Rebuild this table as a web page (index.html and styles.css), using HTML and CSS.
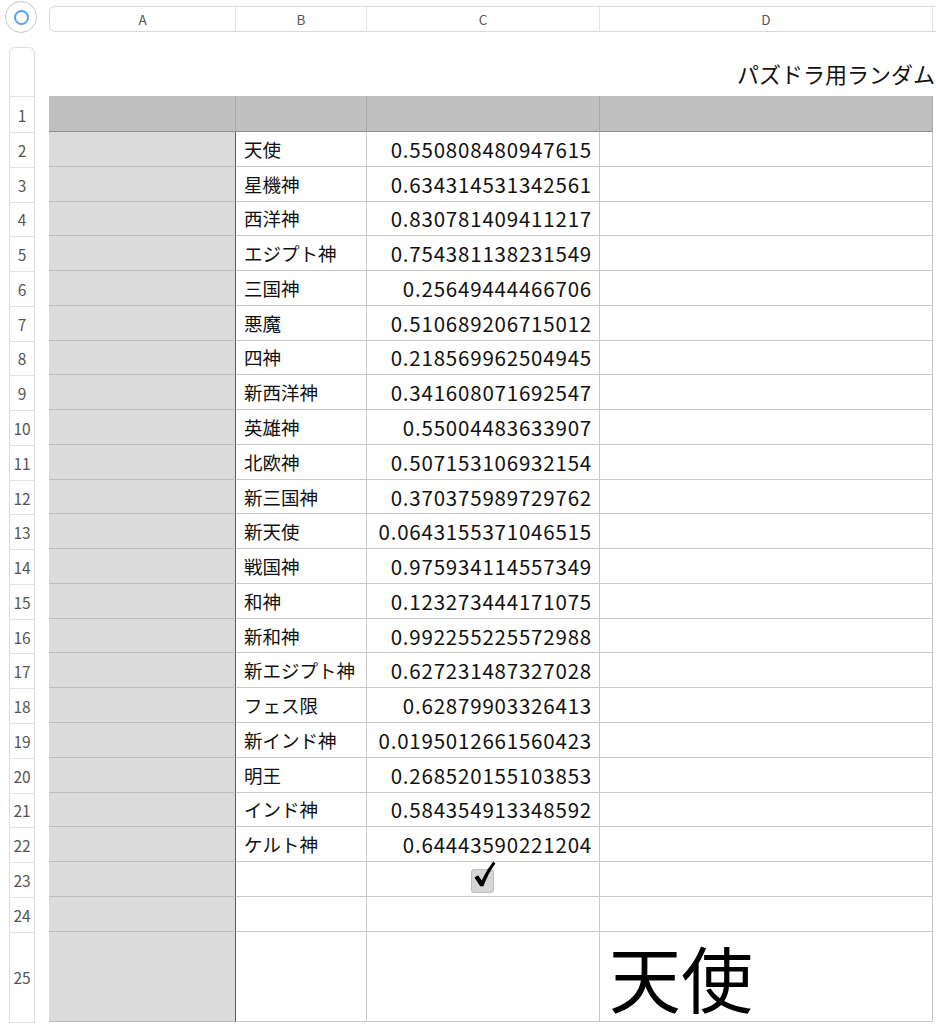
FILE: index.html
```html
<!DOCTYPE html>
<html lang="ja">
<head>
<meta charset="utf-8">
<title>パズドラ用ランダム</title>
<link rel="stylesheet" href="styles.css">
</head>
<body>
<div class="app">
  <div class="topbar">
    <div class="corner"><span class="corner-dot"></span></div>
    <div class="colheads">
      <div class="colhead col-a">A</div>
      <div class="colhead col-b">B</div>
      <div class="colhead col-c">C</div>
      <div class="colhead col-d">D</div>
      <div class="colhead col-e"></div>
    </div>
  </div>
  <div class="sheet">
    <div class="rownums">
      <div class="rn rn-title"></div>
      <div class="rn rn-head">1</div>
      <div class="rn">2</div>
      <div class="rn">3</div>
      <div class="rn">4</div>
      <div class="rn">5</div>
      <div class="rn">6</div>
      <div class="rn">7</div>
      <div class="rn">8</div>
      <div class="rn">9</div>
      <div class="rn">10</div>
      <div class="rn">11</div>
      <div class="rn">12</div>
      <div class="rn">13</div>
      <div class="rn">14</div>
      <div class="rn">15</div>
      <div class="rn">16</div>
      <div class="rn">17</div>
      <div class="rn">18</div>
      <div class="rn">19</div>
      <div class="rn">20</div>
      <div class="rn">21</div>
      <div class="rn">22</div>
      <div class="rn">23</div>
      <div class="rn">24</div>
      <div class="rn rn-big">25</div>
    </div>
    <div class="tablewrap">
      <div class="title"><span class="title-text">パズドラ用ランダム</span></div>
      <div class="grid">
        <div class="c hdr"></div><div class="c hdr"></div><div class="c hdr"></div><div class="c hdr"></div>

        <div class="c ca"></div><div class="c name">天使</div><div class="c num">0.550808480947615</div><div class="c"></div>
        <div class="c ca"></div><div class="c name">星機神</div><div class="c num">0.634314531342561</div><div class="c"></div>
        <div class="c ca"></div><div class="c name">西洋神</div><div class="c num">0.830781409411217</div><div class="c"></div>
        <div class="c ca"></div><div class="c name">エジプト神</div><div class="c num">0.754381138231549</div><div class="c"></div>
        <div class="c ca"></div><div class="c name">三国神</div><div class="c num">0.25649444466706</div><div class="c"></div>
        <div class="c ca"></div><div class="c name">悪魔</div><div class="c num">0.510689206715012</div><div class="c"></div>
        <div class="c ca"></div><div class="c name">四神</div><div class="c num">0.218569962504945</div><div class="c"></div>
        <div class="c ca"></div><div class="c name">新西洋神</div><div class="c num">0.341608071692547</div><div class="c"></div>
        <div class="c ca"></div><div class="c name">英雄神</div><div class="c num">0.55004483633907</div><div class="c"></div>
        <div class="c ca"></div><div class="c name">北欧神</div><div class="c num">0.507153106932154</div><div class="c"></div>
        <div class="c ca"></div><div class="c name">新三国神</div><div class="c num">0.370375989729762</div><div class="c"></div>
        <div class="c ca"></div><div class="c name">新天使</div><div class="c num">0.0643155371046515</div><div class="c"></div>
        <div class="c ca"></div><div class="c name">戦国神</div><div class="c num">0.975934114557349</div><div class="c"></div>
        <div class="c ca"></div><div class="c name">和神</div><div class="c num">0.123273444171075</div><div class="c"></div>
        <div class="c ca"></div><div class="c name">新和神</div><div class="c num">0.992255225572988</div><div class="c"></div>
        <div class="c ca"></div><div class="c name">新エジプト神</div><div class="c num">0.627231487327028</div><div class="c"></div>
        <div class="c ca"></div><div class="c name">フェス限</div><div class="c num">0.62879903326413</div><div class="c"></div>
        <div class="c ca"></div><div class="c name">新インド神</div><div class="c num">0.0195012661560423</div><div class="c"></div>
        <div class="c ca"></div><div class="c name">明王</div><div class="c num">0.268520155103853</div><div class="c"></div>
        <div class="c ca"></div><div class="c name">インド神</div><div class="c num">0.584354913348592</div><div class="c"></div>
        <div class="c ca"></div><div class="c name">ケルト神</div><div class="c num">0.64443590221204</div><div class="c"></div>

        <div class="c ca"></div><div class="c"></div>
        <div class="c check-cell">
          <span class="checkbox">
            <svg class="checkmark" viewBox="0 0 24 28" width="24" height="28" aria-hidden="true">
              <path d="M2.5 17.5 L6.2 15.2 L9.6 20.6 Q14.5 10 21.2 1.6 L23.4 3.4 Q16.6 12.5 11.4 26.2 L8.2 26.2 Z" fill="#000"/>
            </svg>
          </span>
        </div>
        <div class="c"></div>

        <div class="c ca"></div><div class="c"></div><div class="c"></div><div class="c"></div>

        <div class="c ca"></div><div class="c"></div><div class="c"></div><div class="c big">天使</div>
      </div>
    </div>
  </div>
</div>
</body>
</html>
```

FILE: styles.css
```css
html, body {
  margin: 0;
  padding: 0;
  background: #ffffff;
}

body {
  font-family: "Noto Sans CJK JP", "Noto Sans", sans-serif;
  color: #111;
  overflow: hidden;
  width: 936px;
  height: 1024px;
}

.app {
  width: 936px;
  overflow: hidden;
}

/* top bar */
.topbar {
  display: flex;
  align-items: flex-start;
  padding: 1px 0 0 5px;
  height: 34px;
  box-sizing: border-box;
}

.corner {
  width: 32px;
  height: 32px;
  box-sizing: border-box;
  border: 1.5px solid #c8c8c8;
  border-radius: 50%;
  display: flex;
  align-items: center;
  justify-content: center;
  flex: none;
}

.corner-dot {
  width: 15px;
  height: 15px;
  box-sizing: border-box;
  border: 2px solid #5b9df0;
  border-radius: 50%;
}

.colheads {
  display: flex;
  margin: 5px 0 0 12px;
  height: 26px;
  box-sizing: border-box;
  border: 1px solid #dadada;
  border-radius: 6px;
  flex: none;
  width: 920px;
}

.colhead {
  box-sizing: border-box;
  border-right: 1px solid #e2e2e2;
  font-size: 13.5px;
  color: #555;
  display: flex;
  align-items: center;
  justify-content: center;
  height: 100%;
  flex: none;
}

.col-a { width: 186px; }
.col-b { width: 131px; }
.col-c { width: 233px; }
.col-d { width: 333px; }
.col-e { flex: 1; border-right: none; }

/* sheet */
.sheet {
  display: flex;
  align-items: flex-start;
  margin-top: 13px;
}

.rownums {
  margin-left: 9px;
  width: 26px;
  box-sizing: border-box;
  border: 1px solid #dedede;
  border-bottom: none;
  border-radius: 6px 6px 0 0;
  display: flex;
  flex-direction: column;
  flex: none;
}

.rn {
  height: 34.78px;
  box-sizing: border-box;
  border-bottom: 1px solid #e3e3e3;
  font-size: 15.5px;
  color: #555;
  display: flex;
  align-items: center;
  justify-content: center;
}

.rn-title { height: 49px; }
.rn-head { height: 36px; }
.rn-big { height: 90px; }

.tablewrap {
  margin-left: 14px;
  flex: none;
  width: 900px;
}

.title {
  height: 49px;
  display: flex;
  align-items: center;
  padding-left: 688px;
  box-sizing: border-box;
  white-space: nowrap;
  overflow: hidden;
}

.title-text {
  font-size: 22px;
  color: #111;
  padding-top: 2px;
}

.grid {
  display: grid;
  grid-template-columns: 187px 131px 233px 333px;
  grid-template-rows: 36px repeat(23, 34.78px) 90px;
}

.c {
  box-sizing: border-box;
  border-right: 1px solid #c9c9c9;
  border-bottom: 1px solid #c9c9c9;
  display: flex;
  align-items: center;
  min-width: 0;
  white-space: nowrap;
}

.hdr {
  background: #bfc0bf;
  border-bottom: 1px solid #8c8c8c;
  border-right-color: #a9a9a9;
}

.ca {
  background: #dbdbdb;
  border-right: 1px solid #5c5c5c;
  border-bottom-color: #bcbcbc;
}

.name {
  font-size: 18.5px;
  padding-left: 8px;
  color: #111;
}

.num {
  font-size: 20.5px;
  letter-spacing: 0.8px;
  justify-content: flex-end;
  padding-right: 7px;
  color: #111;
}

.check-cell {
  justify-content: center;
  padding-right: 1px;
}

.checkbox {
  position: relative;
  width: 23px;
  height: 24px;
  box-sizing: border-box;
  background: #d5d5d5;
  border: 1px solid #bdbdbd;
  border-radius: 3px;
  margin-top: 5px;
}

.checkmark {
  position: absolute;
  left: 0px;
  top: -10px;
}

.big {
  font-size: 72px;
  padding-left: 9px;
  color: #000;
  line-height: 1.15;
}
```
